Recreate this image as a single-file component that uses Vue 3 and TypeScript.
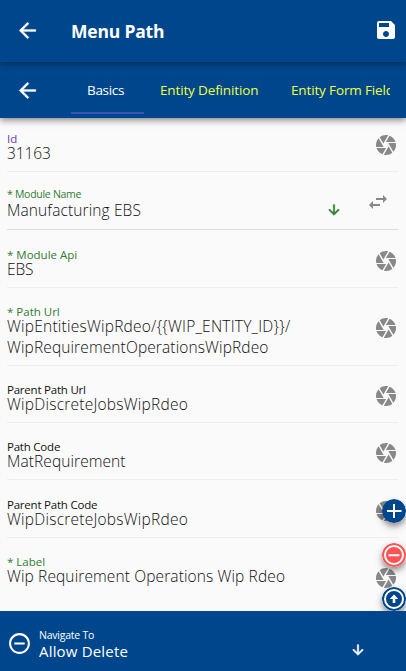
<script setup lang="ts">
interface Field {
  id: string
  label: string
  lines: string[]
  tone: 'accent' | 'required' | 'plain'
  kind: 'input' | 'select'
}

const tabs = [
  { id: 'basics', title: 'Basics', active: true },
  { id: 'definition', title: 'Entity Definition', active: false },
  { id: 'fields', title: 'Entity Form Fields', active: false },
]

const fields: Field[] = [
  { id: 'record-id', label: 'Id', lines: ['31163'], tone: 'accent', kind: 'input' },
  { id: 'module-name', label: '* Module Name', lines: ['Manufacturing EBS'], tone: 'required', kind: 'select' },
  { id: 'module-api', label: '* Module Api', lines: ['EBS'], tone: 'required', kind: 'input' },
  { id: 'path-url', label: '* Path Url', lines: ['WipEntitiesWipRdeo/{{WIP_ENTITY_ID}}/', 'WipRequirementOperationsWipRdeo'], tone: 'required', kind: 'input' },
  { id: 'parent-url', label: 'Parent Path Url', lines: ['WipDiscreteJobsWipRdeo'], tone: 'plain', kind: 'input' },
  { id: 'path-code', label: 'Path Code', lines: ['MatRequirement'], tone: 'plain', kind: 'input' },
  { id: 'parent-code', label: 'Parent Path Code', lines: ['WipDiscreteJobsWipRdeo'], tone: 'plain', kind: 'input' },
  { id: 'path-label', label: '* Label', lines: ['Wip Requirement Operations Wip Rdeo'], tone: 'required', kind: 'input' },
]

const arrowBack = 'M20 11H7.83l5.59-5.59L12 4l-8 8 8 8 1.41-1.41L7.83 13H20v-2z'
const arrowDown = 'M20 12l-1.41-1.41L13 16.17V4h-2v12.17l-5.58-5.59L4 12l8 8 8-8z'
</script>

<template>
  <div class="app">
    <header class="title-bar">
      <svg class="icon back" viewBox="0 0 24 24"><path :d="arrowBack" /></svg>
      <h1>Menu Path</h1>
      <svg class="icon save" viewBox="0 0 24 24"><path d="M17 3H5c-1.11 0-2 .9-2 2v14c0 1.1.89 2 2 2h14c1.1 0 2-.9 2-2V7l-4-4zm-5 16c-1.66 0-3-1.34-3-3s1.34-3 3-3 3 1.34 3 3-1.34 3-3 3zm3-10H5V5h10v4z" /></svg>
    </header>

    <nav class="tab-bar">
      <svg class="icon back" viewBox="0 0 24 24"><path :d="arrowBack" /></svg>
      <div class="tabs">
        <div v-for="tab in tabs" :key="tab.id" class="tab" :class="[tab.id, { active: tab.active }]">
          <span>{{ tab.title }}</span>
        </div>
      </div>
    </nav>

    <main class="form">
      <section v-for="field in fields" :key="field.id" class="field" :class="[field.kind, field.id]">
        <div class="text">
          <div class="label" :class="field.tone">{{ field.label }}</div>
          <div class="value"><div v-for="line in field.lines" :key="line">{{ line }}</div></div>
        </div>
        <template v-if="field.kind === 'select'">
          <svg class="caret" viewBox="0 0 24 24"><path :d="arrowDown" /></svg>
          <svg class="swap" viewBox="0 0 24 24"><path d="M6.99 11L3 15l3.99 4v-3H14v-2H6.99v-3zM21 9l-3.99-4v3H10v2h7.01v3L21 9z" /></svg>
        </template>
        <svg v-else class="shutter" viewBox="0 0 24 24"><path d="M9.4 10.5l4.77-8.26C13.47 2.09 12.75 2 12 2c-2.4 0-4.6.85-6.32 2.25l3.66 6.35.06-.1zM21.54 9c-.92-2.92-3.15-5.26-6-6.34L11.88 9h9.66zm.26 1h-7.49l.29.5 4.76 8.25C21 16.97 22 14.61 22 12c0-.69-.07-1.35-.2-2zM8.54 12l-3.9-6.75C3.01 7.03 2 9.39 2 12c0 .69.07 1.35.2 2h7.49l-1.15-2zm-6.08 3c.92 2.92 3.15 5.26 6 6.34L12.12 15H2.46zm11.27 0l-3.9 6.76c.7.15 1.42.24 2.17.24 2.4 0 4.6-.85 6.32-2.25l-3.66-6.35-.93 1.6z" /></svg>
      </section>
    </main>

    <div class="fabs">
      <svg class="fab" viewBox="0 0 24 24"><circle class="blue" cx="12" cy="12" r="12" /><path class="line" d="M5 12h14.500M12 5v14" /></svg>
      <svg class="fab" viewBox="0 0 24 24"><circle class="red" cx="12" cy="12" r="12" /><circle class="ring" cx="12" cy="12" r="9" /><path class="line" d="M6.500 12.300h11" /></svg>
      <svg class="fab" viewBox="0 0 24 24"><circle class="blue" cx="12" cy="12" r="12" /><circle class="ring" cx="12" cy="12" r="9" /><path class="solid" d="M12 7.500l4.300 4.500h-3v4h-2.600v-4h-3z" /></svg>
    </div>

    <footer class="nav-bar">
      <svg class="minus" viewBox="0 0 24 24"><path d="M7 11v2h10v-2H7zm5-9C6.480 2 2 6.480 2 12s4.480 10 10 10 10-4.480 10-10S17.520 2 12 2zm0 18c-4.410 0-8-3.590-8-8s3.590-8 8-8 8 3.590 8 8-3.590 8-8 8z" /></svg>
      <div class="destination">
        <div class="caption">Navigate To</div>
        <div class="choice">Allow Delete</div>
      </div>
      <svg class="caret" viewBox="0 0 24 24"><path :d="arrowDown" /></svg>
    </footer>
  </div>
</template>

<style>
body {
  background: #fafafa;
}
</style>

<style scoped>
.app {
  position: relative;
  display: flex;
  flex-direction: column;
  height: 671px;
  overflow: hidden;
  background: #fafafa;
  font-family: "Open Sans", "Noto Sans", sans-serif;
  white-space: nowrap;
}
svg {
  flex: none;
  display: block;
  fill: currentColor;
}
.icon {
  width: 24px;
  height: 24px;
}
.back {
  width: 25px;
  height: 25px;
  stroke: currentColor;
  stroke-width: 0.3;
}
.title-bar,
.tab-bar {
  box-sizing: border-box;
  display: flex;
  align-items: center;
  flex: none;
  background: #00468c;
  color: #fff;
}
.title-bar {
  height: 62px;
  padding: 0 8px 2px 15px;
  z-index: 2;
  box-shadow: 0 2px 6px rgba(0, 0, 0, 0.38);
}
.title-bar h1 {
  flex: 1;
  margin: 2px 0 0 31px;
  font-size: 17.5px;
  font-weight: 700;
  line-height: 24px;
  letter-spacing: -0.2px;
}
.tab-bar {
  height: 56px;
  padding: 0 16px 0 15px;
  z-index: 1;
  box-shadow: 0 2px 7px rgba(0, 0, 0, 0.5);
}
.tabs {
  display: flex;
  flex: 1;
  align-self: stretch;
  min-width: 0;
  margin-left: 31px;
  overflow: hidden;
}
.tab {
  box-sizing: border-box;
  flex: none;
  height: 52px;
  padding: 18px 16px 0;
  border-bottom: 2px solid transparent;
  color: #eeff41;
  font-size: 13.5px;
  line-height: 20px;
  letter-spacing: -0.14px;
}
.tab.basics { width: 73px; letter-spacing: -0.3px; }
.tab.definition { width: 131px; }
.tab.active {
  color: #fff;
  border-color: #3f51b5;
}
.form {
  flex: none;
  height: 493px;
  padding: 0 8px 0 7px;
  overflow: hidden;
}
.field {
  box-sizing: border-box;
  display: flex;
  align-items: flex-start;
  height: 57px;
  padding-top: 16px;
  border-bottom: 1px solid #eee;
}
.field .text {
  flex: 1;
  min-width: 0;
}
.field.record-id { height: 54px; padding-top: 13px; }
.field.module-name { height: 58px; padding-top: 14px; border-color: #d5dde3; }
.field.module-api { height: 58px; padding-top: 17px; }
.field.path-url { height: 78px; }
.field.parent-code { height: 58px; padding-top: 17px; }
.field.path-label { height: 73px; border: 0; }
.label {
  height: 15px;
  font-size: 11.5px;
  line-height: 16px;
}
.select .label {
  height: 17px;
  font-size: 10.5px;
  letter-spacing: -0.28px;
}
.label.accent { color: #673ab7; }
.label.required { color: #2e7d32; }
.label.plain { color: #111; letter-spacing: -0.22px; }
.value {
  margin-top: -3px;
  color: #111;
  font-size: 15.5px;
  font-weight: 300;
  line-height: 21px;
  letter-spacing: 0.12px;
}
.record-id .value,
.module-api .value { letter-spacing: -0.1px; }
.parent-url .value,
.parent-code .value { letter-spacing: 0.24px; }
.path-url .value div:first-child { letter-spacing: 0.23px; }
.path-code .value { letter-spacing: 0.08px; }
.shutter {
  width: 24px;
  height: 24px;
  margin-top: 2px;
  color: #888;
}
.path-url .shutter { margin-top: 12px; }
.parent-code .shutter { margin-top: 2px; }
.path-label .shutter { margin-top: 12px; }
.select .caret {
  width: 16px;
  height: 16px;
  margin: 16px 24px 0 0;
  color: #2e7d32;
}
.caret {
  stroke: currentColor;
  stroke-width: 0.9;
}
.swap {
  width: 24px;
  height: 24px;
  margin: 4px 8px 0 0;
  color: #888;
}
.fabs {
  position: absolute;
  z-index: 3;
  right: 0;
  top: 499px;
  display: flex;
  flex-direction: column;
  gap: 20px;
}
.fab {
  width: 24px;
  height: 24px;
  border-radius: 50%;
  box-shadow: 0 3px 5px rgba(0, 0, 0, 0.3), 0 4px 10px rgba(0, 0, 0, 0.18);
}
.blue { fill: #00468c; }
.red { fill: #ff5252; }
.ring { fill: none; stroke: #fff; stroke-width: 2; }
.line { fill: none; stroke: #fff; stroke-width: 2; }
.solid { fill: #fff; }
.nav-bar {
  position: relative;
  z-index: 4;
  box-sizing: border-box;
  display: flex;
  flex: none;
  height: 60px;
  padding-left: 7px;
  background: #00468c;
  color: #fff;
}
.minus {
  width: 25px;
  height: 25px;
  margin-top: 20px;
}
.destination {
  flex: 1;
  margin: 17px 0 0 7px;
}
.caption {
  font-size: 10.5px;
  line-height: 15px;
  letter-spacing: -0.22px;
}
.choice {
  font-size: 15px;
  line-height: 17px;
  letter-spacing: 0.18px;
}
.nav-bar .caret {
  width: 16px;
  height: 16px;
  margin: 31px 40px 0 0;
}
</style>
